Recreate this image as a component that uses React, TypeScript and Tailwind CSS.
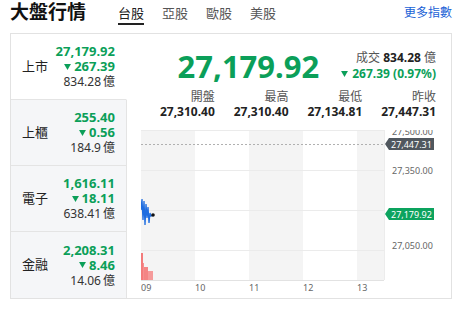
import React from 'react'

const GREEN = 'text-[#0b9f59]'

function Down() {
  return (
    <svg width={7} height={6} viewBox="0 0 8 7" className="inline-block">
      <path d="M0 0 H8 L4 7 Z" fill="#0b9f59" />
    </svg>
  )
}

type Idx = { name: string; value: string; change: string; vol: string; active?: boolean; last?: boolean }

const rows: Idx[] = [
  { name: '上市', value: '27,179.92', change: '267.39', vol: '834.28', active: true },
  { name: '上櫃', value: '255.40', change: '0.56', vol: '184.9' },
  { name: '電子', value: '1,616.11', change: '18.11', vol: '638.41' },
  { name: '金融', value: '2,208.31', change: '8.46', vol: '14.06', last: true },
]

function Row({ r }: { r: Idx }) {
  return (
    <div
      className={
        'flex h-[66px] items-center justify-between pl-[11px] pr-[11px] border-r ' +
        (r.active ? 'bg-white border-r-white ' : 'bg-[#f5f6f8] border-r-[#e4e4e4] ') +
        (r.last ? '' : 'border-b border-b-[#e4e4e4]')
      }
    >
      <span className="text-[13px] text-[#222]">{r.name}</span>
      <div className="flex flex-col items-end leading-[15px]">
        <span className={`text-[13px] font-bold ${GREEN}`}>{r.value}</span>
        <span className={`flex items-center gap-[3px] text-[13px] font-bold ${GREEN}`}>
          <Down />
          {r.change}
        </span>
        <span className="text-[12px] text-[#333]">{r.vol}&thinsp;億</span>
      </div>
    </div>
  )
}

function Chart() {
  const blue = 'M0,80 L1,69 L2,90 L3,71 L4,95 L5,74 L6,88 L7,77 L8,93 L9,83 L10,86 L12,85'
  return (
    <svg width="311" height="168" className="block" fontFamily="Noto Sans, sans-serif">
      <rect x="0" y="0" width="54" height="150" fill="#f4f4f4" />
      <rect x="108" y="0" width="54" height="150" fill="#f4f4f4" />
      <rect x="216" y="0" width="27" height="150" fill="#f4f4f4" />
      {[0.5, 40.5, 80.5, 120.5].map((y) => (
        <line key={y} x1="0" x2="243" y1={y} y2={y} stroke="#ebebeb" />
      ))}
      <line x1="0" x2="243" y1="150.5" y2="150.5" stroke="#e2e2e2" />
      <line x1="243.5" x2="243.5" y1="0" y2="150" stroke="#ececec" />
      <line x1="0" x2="244" y1="14.5" y2="14.5" stroke="#b0b0b0" strokeDasharray="2 2" />

      <text x="251" y="5" fontSize="9" fill="#666">27,500.00</text>
      <text x="251" y="44" fontSize="9" fill="#666">27,350.00</text>
      <text x="251" y="85" fontSize="9" fill="#666">27,200.00</text>
      <text x="251" y="119" fontSize="9" fill="#666">27,050.00</text>

      {['09', '10', '11', '12', '13'].map((t, i) => (
        <text key={t} x={i * 54} y="161" fontSize="9" fill="#666">{t}</text>
      ))}

      {/* volume */}
      <rect x="0" y="123" width="2" height="27" fill="#f37b7b" />
      <rect x="2" y="133" width="1" height="17" fill="#f59090" />
      <rect x="3" y="137" width="4" height="13" fill="#f48585" />
      <rect x="7" y="141" width="5" height="9" fill="#f59a9a" />

      <path d={blue} fill="none" stroke="#1f6de0" strokeWidth="1.3" />
      <circle cx="12" cy="85" r="1.8" fill="#111" />

      <path d="M244,14 L248,8 H293 V20 H248 Z" fill="#50575e" />
      <text x="250" y="17.5" fontSize="9" fill="#fff">27,447.31</text>
      <path d="M244,84 L248,78 H293 V90 H248 Z" fill="#0ca35e" />
      <text x="250" y="87.5" fontSize="9" fill="#fff">27,179.92</text>
    </svg>
  )
}

const stats = [
  ['開盤', '27,310.40'],
  ['最高', '27,310.40'],
  ['最低', '27,134.81'],
  ['昨收', '27,447.31'],
]

export default function App() {
  return (
    <div className="w-[462px] h-[318px] bg-white px-[10px] font-[family-name:Noto_Sans,Noto_Sans_CJK_TC,sans-serif] text-[#222]">
      <div className="flex h-[33px] items-start">
        <h1 className="w-[108px] pt-[2px] text-[19px] font-bold leading-[20px] text-[#111]">大盤行情</h1>
        <nav className="flex gap-[18px] pt-[4px] text-[13px]">
          <span className="border-b-2 border-[#222] pb-[1px] leading-[18px] text-[#222]">台股</span>
          <span className="leading-[18px] text-[#555]">亞股</span>
          <span className="leading-[18px] text-[#555]">歐股</span>
          <span className="leading-[18px] text-[#555]">美股</span>
        </nav>
        <a className="ml-auto pt-[5px] text-[12px] leading-[16px] text-[#1a62d6]">更多指數</a>
      </div>

      <div className="flex border border-[#e2e2e2]">
        <div className="w-[116px] shrink-0">
          {rows.map((r) => (
            <Row key={r.name} r={r} />
          ))}
        </div>

        <div className="flex-1 pl-[14px]">
          <div className="flex h-[36px] mt-[14px] items-center justify-end gap-[22px] pr-[16px]">
            <span className={`text-[31px] font-bold leading-[36px] ${GREEN}`}>27,179.92</span>
            <div className="flex flex-col items-end leading-[16px]">
              <span className="text-[12px] text-[#555]">
                成交 <b className="text-[#222]">834.28</b> 億
              </span>
              <span className={`flex items-center gap-[4px] text-[12px] font-bold ${GREEN}`}>
                <Down />
                267.39 (0.97%)
              </span>
            </div>
          </div>

          <div className="mt-[5px] grid grid-cols-4 pr-[16px] text-right">
            {stats.map(([k, v]) => (
              <div key={k} className="flex flex-col items-end leading-[15px]">
                <span className="text-[12px] text-[#555]">{k}</span>
                <span className="text-[12px] font-bold text-[#222]">{v}</span>
              </div>
            ))}
          </div>

          <div className="mt-[11px]">
            <Chart />
          </div>
        </div>
      </div>
    </div>
  )
}
